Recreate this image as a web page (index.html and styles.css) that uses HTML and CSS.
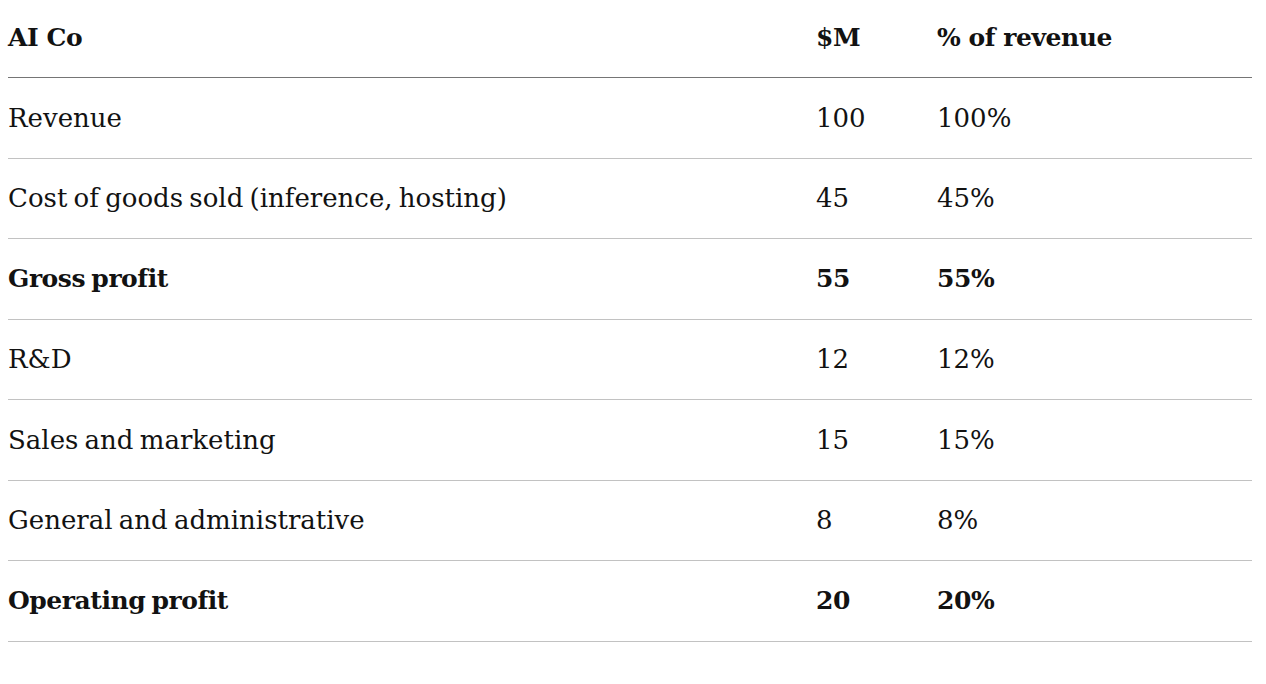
FILE: index.html
```html
<!DOCTYPE html>
<html lang="en">
<head>
<meta charset="utf-8">
<title>AI Co</title>
<link rel="stylesheet" href="styles.css">
</head>
<body>
<div class="page">
  <table class="pl">
    <colgroup>
      <col class="c-label">
      <col class="c-usd">
      <col class="c-pct">
    </colgroup>
    <thead>
      <tr><th>AI Co</th><th>$M</th><th>% of revenue</th></tr>
    </thead>
    <tbody>
      <tr><td>Revenue</td><td>100</td><td>100%</td></tr>
      <tr><td>Cost of goods sold (inference, hosting)</td><td>45</td><td>45%</td></tr>
      <tr class="total"><td>Gross profit</td><td>55</td><td>55%</td></tr>
      <tr><td>R&amp;D</td><td>12</td><td>12%</td></tr>
      <tr><td>Sales and marketing</td><td>15</td><td>15%</td></tr>
      <tr><td>General and administrative</td><td>8</td><td>8%</td></tr>
      <tr class="total"><td>Operating profit</td><td>20</td><td>20%</td></tr>
    </tbody>
  </table>
</div>
</body>
</html>
```

FILE: styles.css
```css
html, body {
  margin: 0;
  padding: 0;
  background: #ffffff;
}

.page {
  padding: 0 14px 0 8px;
}

.pl {
  width: 1244px;
  border-collapse: collapse;
  table-layout: fixed;
  font-family: "DejaVu Serif", "Liberation Serif", serif;
  font-size: 26px;
  line-height: 30px;
  word-spacing: -2px;
  color: #121212;
}

.c-label { width: 808px; }
.c-usd { width: 121px; }
.c-pct { width: auto; }

.pl th,
.pl td {
  text-align: left;
  padding: 0;
  white-space: nowrap;
}

.pl th {
  font-weight: bold;
  font-size: 25px;
  letter-spacing: -0.45px;
  word-spacing: 0;
  padding-top: 23px;
  padding-bottom: 24px;
  border-bottom: 1px solid #757575;
}

.pl td {
  font-weight: normal;
  padding-top: 24.5px;
  padding-bottom: 25px;
  border-bottom: 1px solid #c2c2c2;
}

.pl tr.total td {
  font-weight: bold;
  font-size: 25px;
  letter-spacing: -0.45px;
}
```
